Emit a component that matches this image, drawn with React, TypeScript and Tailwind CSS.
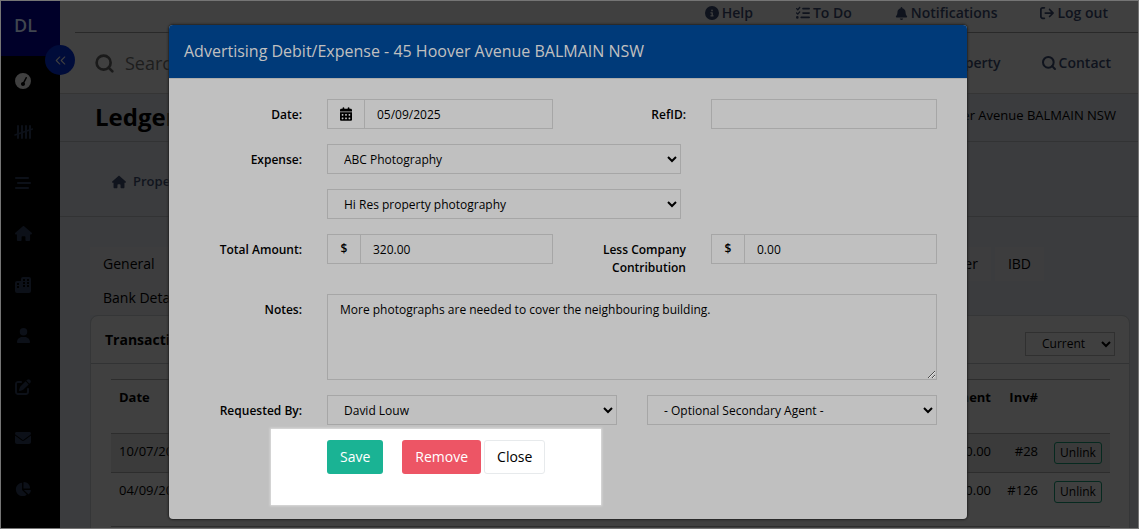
import type { ReactNode } from "react";
import {
  FaArrowRightFromBracket,
  FaBarsStaggered,
  FaBell,
  FaCalendarDays,
  FaChartPie,
  FaCircleInfo,
  FaEnvelope,
  FaGaugeSimpleHigh,
  FaHouse,
  FaListCheck,
  FaPenToSquare,
  FaUser,
} from "react-icons/fa6";
import { ChevronsLeft, Search } from "lucide-react";

function TallyIcon() {
  return (
    <svg width="19" height="16" viewBox="0 0 19 16" fill="none" stroke="currentColor" strokeWidth="2" strokeLinecap="round">
      <path d="M4 2v12M8 2v12M12 2v12M16 2v12" />
      <path d="M1 11 18.5 5" strokeWidth="1.5" />
    </svg>
  );
}

function BuildingsIcon() {
  return (
    <svg width="16" height="16" viewBox="0 0 16 16" fill="currentColor" fillRule="evenodd">
      <path d="M8 0h6a2 2 0 0 1 2 2v12a2 2 0 0 1-2 2H2a2 2 0 0 1-2-2V6a2 2 0 0 1 2-2h4V2a2 2 0 0 1 2-2ZM8 2v2h2V2ZM12 2v2h2V2ZM8 5v2h2V5ZM12 5v2h2V5ZM8 8v2h2V8ZM12 8v2h2V8ZM2 6v2h2V6ZM2 9v2h2V9Z" />
    </svg>
  );
}

const menu = [
  { label: "Dashboard", icon: <FaGaugeSimpleHigh size={16} />, active: true },
  { label: "Tally", icon: <TallyIcon /> },
  { label: "Lists", icon: <FaBarsStaggered size={16} /> },
  { label: "Properties", icon: <FaHouse size={17} /> },
  { label: "Buildings", icon: <BuildingsIcon /> },
  { label: "Contacts", icon: <FaUser size={15} /> },
  { label: "Edit", icon: <FaPenToSquare size={16} /> },
  { label: "Mail", icon: <FaEnvelope size={16} /> },
  { label: "Reports", icon: <FaChartPie size={16} /> },
];

const topLinks = [
  { label: "Help", icon: <FaCircleInfo size={14} /> },
  { label: "To Do", icon: <FaListCheck size={14} /> },
  { label: "Notifications", icon: <FaBell size={13} /> },
  { label: "Log out", icon: <FaArrowRightFromBracket size={14} /> },
];

const rows = [
  { date: "10/07/2025", payment: "$320.00", inv: "#28", className: "h-[39px] bg-[#3b3b3b]" },
  { date: "04/09/2025", payment: "$320.00", inv: "#126", className: "h-[54px]" },
];

const control = "h-[30px] w-full rounded-none border border-[#a6a6a6] bg-[#c0c0c0] px-3 text-xs text-black outline-none";

function Label({ htmlFor, children }: { htmlFor: string; children: ReactNode }) {
  return (
    <label
      htmlFor={htmlFor}
      className="col-span-2 pt-[7px] pr-[10px] pb-[2px] text-right text-xs leading-[18px] font-semibold"
    >
      {children}
    </label>
  );
}

function AddonInput({ id, value, addon }: { id: string; value: string; addon: ReactNode }) {
  return (
    <div className="col-span-4 px-[15px]">
      <div className="flex">
        <span className="flex h-[30px] min-w-[33px] shrink-0 items-center justify-center border border-r-0 border-[#a6a6a6] px-3 text-xs font-semibold">
          {addon}
        </span>
        <input id={id} defaultValue={value} className={control} />
      </div>
    </div>
  );
}

function Sidebar() {
  return (
    <aside className="relative w-[59px] shrink-0 bg-black">
      <div className="flex h-[55px] items-center bg-[#000029] pb-2 pl-[13px] text-lg font-semibold text-[#40464f]">
        DL
      </div>
      <button
        type="button"
        aria-label="Collapse menu"
        className="absolute top-11 left-11 z-10 flex size-[30px] items-center justify-center rounded-full bg-[#000c3a] text-[#404040]"
      >
        <ChevronsLeft size={17} strokeWidth={1.5} />
      </button>
      <nav className="-mt-px">
        {menu.map((item) => (
          <a
            key={item.label}
            href="#"
            aria-label={item.label}
            className={`flex h-[51px] w-11 items-center justify-center ${item.active ? "text-[#404040]" : "text-[#0c1018]"}`}
          >
            {item.icon}
          </a>
        ))}
      </nav>
    </aside>
  );
}

function LedgerPage() {
  return (
    <main className="min-w-0 flex-1">
      <div className="bg-[#404040] text-[#0f131d]">
        <div className="ml-[15px] flex h-8 items-start justify-end gap-[43px] border-b border-[#292929] pt-[2px] pr-[30px] text-sm font-semibold">
          {topLinks.map((link) => (
            <a key={link.label} href="#" className="flex items-center gap-[3px]">
              {link.icon}
              {link.label}
            </a>
          ))}
        </div>
        <div className="flex h-[61px] items-center border-b border-[#353535] pr-[27px] pl-[34px] text-sm font-semibold">
          <Search size={21} strokeWidth={3} className="text-[#1a1a1a]" />
          <input
            aria-label="Search"
            placeholder="Search"
            className="ml-[10px] min-w-0 flex-1 bg-transparent text-lg font-normal outline-none placeholder:text-[#1d1d1d]"
          />
          <a href="#" className="mr-[40px] flex items-center gap-[2px]">
            <Search size={16} strokeWidth={3} />
            Property
          </a>
          <a href="#" className="flex items-center gap-[2px]">
            <Search size={16} strokeWidth={3} />
            Contact
          </a>
        </div>
      </div>

      <div className="flex h-12 items-center justify-between border-b border-[#323334] pr-[22px] pb-[2px] pl-[35px]">
        <h1 className="text-2xl font-bold">Ledgers</h1>
        <span className="pb-[2px] text-[13px] font-medium">45 Hoover Avenue BALMAIN NSW</span>
      </div>
      <div className="flex h-[75px] items-center border-b border-[#323334] pt-[5px] pl-[52px]">
        <a href="#" className="flex items-center gap-[7px] text-[13px] font-semibold text-[#10141d]">
          <FaHouse size={14} />
          Property
        </a>
      </div>

      <div className="pt-[30px] pr-2 pl-[30px]">
        <div className="flex h-[34px] gap-1 pr-[86px] text-sm font-medium">
          <a href="#" className="mr-auto bg-[#3d3d3e] px-[13px] py-[7px]">General</a>
          <a href="#" className="bg-[#3d3d3e] px-[13px] py-[7px]">Ledger</a>
          <a href="#" className="bg-[#3d3d3e] px-[13px] py-[7px]">IBD</a>
        </div>
        <div className="flex h-[34px] text-sm font-medium">
          <a href="#" className="bg-[#3d3d3e] px-[13px] py-[7px]">Bank Details</a>
        </div>

        <section className="h-[240px] rounded-t-lg border border-[#353637] bg-[#404040]">
          <div className="flex h-12 items-center justify-between border-b border-[#323334] px-[14px]">
            <h2 className="text-sm font-bold">Transactions</h2>
            <select
              aria-label="Period"
              className="mt-2 h-6 w-[90px] border border-[#303030] bg-[#404040] pl-3 text-xs font-medium"
            >
              <option>Current</option>
            </select>
          </div>
          <div className="pt-[15px] pr-[19px] pl-5">
            <table className="w-full text-[13px]">
              <thead>
                <tr className="h-[54px] border-y border-[#2d2d2d] align-top">
                  <th className="px-2 pt-2 text-left font-bold">Date</th>
                  <th className="px-2 pt-2 text-right font-bold">Payment</th>
                  <th className="w-[47px] pt-2 pr-2 text-right font-bold">Inv#</th>
                  <th className="w-16" />
                </tr>
              </thead>
              <tbody>
                {rows.map((row) => (
                  <tr key={row.inv} className={`border-b border-[#2d2d2d] align-top font-medium ${row.className}`}>
                    <td className="px-2 pt-2">{row.date}</td>
                    <td className="px-2 pt-2 text-right">{row.payment}</td>
                    <td className="pt-2 pr-2 text-right">{row.inv}</td>
                    <td className="pt-2 pr-2 pl-2">
                      <button
                        type="button"
                        className="block h-[22px] w-full rounded-[3px] border border-[#06291f] text-xs font-medium"
                      >
                        Unlink
                      </button>
                    </td>
                  </tr>
                ))}
              </tbody>
            </table>
          </div>
        </section>
      </div>
    </main>
  );
}

function ExpenseModal() {
  return (
    <div className="absolute inset-0 z-20 flex items-start justify-center pt-6 pr-[3px]">
      <div
        role="dialog"
        aria-labelledby="modal-title"
        className="w-full max-w-[798px] overflow-hidden rounded-[4px] bg-[#c0c0c0] shadow-[0_0_2px_1px_#222]"
      >
        <header className="flex h-[54px] items-center border-b border-[#acacac] bg-[#003a79] px-[15px] pb-[2px]">
          <h2 id="modal-title" className="text-base text-[#c0c0c0]">
            Advertising Debit/Expense - 45 Hoover Avenue BALMAIN NSW
          </h2>
        </header>
        <form className="grid grid-cols-12 items-start gap-y-[15px] px-[15px] pt-5 pb-[45px]">
          <Label htmlFor="date">Date:</Label>
          <AddonInput id="date" value="05/09/2025" addon={<FaCalendarDays className="h-[14px] w-3" />} />
          <Label htmlFor="ref">RefID:</Label>
          <div className="col-span-4 px-[15px]">
            <input id="ref" className={control} />
          </div>

          <Label htmlFor="expense">Expense:</Label>
          <div className="col-span-6 flex flex-col gap-[15px] px-[15px]">
            <select id="expense" className={control}>
              <option>ABC Photography</option>
            </select>
            <select aria-label="Expense item" className={control}>
              <option>Hi Res property photography</option>
            </select>
          </div>
          <div className="col-span-4" />

          <Label htmlFor="total">Total Amount:</Label>
          <AddonInput id="total" value="320.00" addon="$" />
          <Label htmlFor="less">Less Company Contribution</Label>
          <AddonInput id="less" value="0.00" addon="$" />

          <Label htmlFor="notes">Notes:</Label>
          <div className="col-span-10 px-[15px]">
            <textarea
              id="notes"
              defaultValue="More photographs are needed to cover the neighbouring building."
              className="block h-[86px] w-full border border-[#a6a6a6] bg-[#c0c0c0] px-3 py-[6px] text-xs leading-[18px] outline-none"
            />
          </div>

          <Label htmlFor="agent">Requested By:</Label>
          <div className="col-span-5 px-[15px]">
            <select id="agent" className={control}>
              <option>David Louw</option>
            </select>
          </div>
          <div className="col-span-5 px-[15px]">
            <select aria-label="Secondary agent" className={control}>
              <option>- Optional Secondary Agent -</option>
            </select>
          </div>

          <div className="col-span-10 col-start-3 px-[15px]">
            <div className="relative flex w-fit text-sm">
              {/* spotlight behind the actions */}
              <div className="absolute -top-[11px] -right-14 -bottom-[31px] -left-14 bg-white shadow-[0_0_2px_1px_#dcdcdc]" />
              <button type="button" className="relative mr-[19px] h-[34px] rounded-[3px] bg-[#1ab394] px-[13px] text-white">
                Save
              </button>
              <button type="button" className="relative mr-[3px] h-[34px] rounded-[3px] bg-[#ed5565] px-[13px] text-white">
                Remove
              </button>
              <button type="button" className="relative h-[34px] rounded-[3px] border border-[#e7eaec] bg-white px-3">
                Close
              </button>
            </div>
          </div>
        </form>
      </div>
    </div>
  );
}

export default function App() {
  return (
    <div className="relative flex h-screen overflow-hidden border border-[#757575] bg-[#3b3c3e] font-['Open_Sans',sans-serif] text-black">
      <Sidebar />
      <LedgerPage />
      <ExpenseModal />
    </div>
  );
}
